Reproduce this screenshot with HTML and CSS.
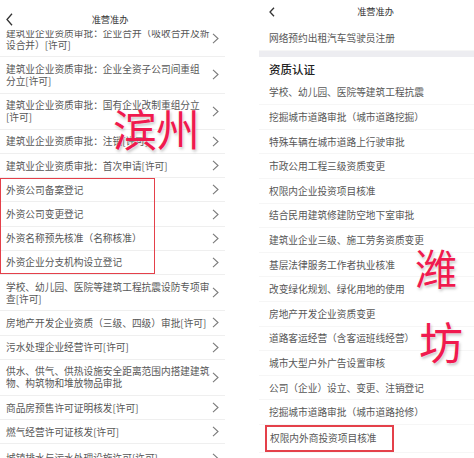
FILE: index.html
```html
<!DOCTYPE html>
<html lang="zh-CN">
<head>
  <meta charset="UTF-8">
  <meta name="viewport" content="width=device-width, initial-scale=1.0">
  <title>准营准办</title>
  <link rel="stylesheet" href="styles.css">
</head>
<body>
  <div class="screens">
    <!-- 滨州 -->
    <section class="phone phone-left">
      <header class="topbar">
        <span class="back">
          <svg width="7" height="13" viewBox="0 0 7 13"><path d="M6 0.8L1 6.5L6 12.2"/></svg>
        </span>
        <h1 class="title">准营准办</h1>
      </header>

      <div class="list">
        <div class="rows">
          <div class="row row-tall row-cut">
            <span class="label">建筑业企业资质审批：企业合并（吸收合并及新<br>设合并）[许可]</span>
            <svg class="chev" width="7" height="11" viewBox="0 0 7 11"><path d="M1 0.8L6 5.5L1 10.2"/></svg>
          </div>
          <div class="row row-tall">
            <span class="label">建筑业企业资质审批：企业全资子公司间重组<br>分立[许可]</span>
            <svg class="chev" width="7" height="11" viewBox="0 0 7 11"><path d="M1 0.8L6 5.5L1 10.2"/></svg>
          </div>
          <div class="row row-tall">
            <span class="label">建筑业企业资质审批：国有企业改制重组分立<br>[许可]</span>
            <svg class="chev" width="7" height="11" viewBox="0 0 7 11"><path d="M1 0.8L6 5.5L1 10.2"/></svg>
          </div>
          <div class="row">
            <span class="label">建筑业企业资质审批：注销[许可]</span>
            <svg class="chev" width="7" height="11" viewBox="0 0 7 11"><path d="M1 0.8L6 5.5L1 10.2"/></svg>
          </div>
          <div class="row">
            <span class="label">建筑业企业资质审批：首次申请[许可]</span>
            <svg class="chev" width="7" height="11" viewBox="0 0 7 11"><path d="M1 0.8L6 5.5L1 10.2"/></svg>
          </div>

          <div class="picked">
            <div class="row">
              <span class="label">外资公司备案登记</span>
              <svg class="chev" width="7" height="11" viewBox="0 0 7 11"><path d="M1 0.8L6 5.5L1 10.2"/></svg>
            </div>
            <div class="row">
              <span class="label">外资公司变更登记</span>
              <svg class="chev" width="7" height="11" viewBox="0 0 7 11"><path d="M1 0.8L6 5.5L1 10.2"/></svg>
            </div>
            <div class="row">
              <span class="label">外资名称预先核准（名称核准）</span>
              <svg class="chev" width="7" height="11" viewBox="0 0 7 11"><path d="M1 0.8L6 5.5L1 10.2"/></svg>
            </div>
            <div class="row">
              <span class="label">外资企业分支机构设立登记</span>
              <svg class="chev" width="7" height="11" viewBox="0 0 7 11"><path d="M1 0.8L6 5.5L1 10.2"/></svg>
            </div>
          </div>

          <div class="row row-tall">
            <span class="label">学校、幼儿园、医院等建筑工程抗震设防专项审<br>查[许可]</span>
            <svg class="chev" width="7" height="11" viewBox="0 0 7 11"><path d="M1 0.8L6 5.5L1 10.2"/></svg>
          </div>
          <div class="row">
            <span class="label">房地产开发企业资质（三级、四级）审批[许可]</span>
            <svg class="chev" width="7" height="11" viewBox="0 0 7 11"><path d="M1 0.8L6 5.5L1 10.2"/></svg>
          </div>
          <div class="row">
            <span class="label">污水处理企业经营许可[许可]</span>
            <svg class="chev" width="7" height="11" viewBox="0 0 7 11"><path d="M1 0.8L6 5.5L1 10.2"/></svg>
          </div>
          <div class="row row-tall">
            <span class="label">供水、供气、供热设施安全距离范围内搭建建筑<br>物、构筑物和堆放物品审批</span>
            <svg class="chev" width="7" height="11" viewBox="0 0 7 11"><path d="M1 0.8L6 5.5L1 10.2"/></svg>
          </div>
          <div class="row">
            <span class="label">商品房预售许可证明核发[许可]</span>
            <svg class="chev" width="7" height="11" viewBox="0 0 7 11"><path d="M1 0.8L6 5.5L1 10.2"/></svg>
          </div>
          <div class="row">
            <span class="label">燃气经营许可证核发[许可]</span>
            <svg class="chev" width="7" height="11" viewBox="0 0 7 11"><path d="M1 0.8L6 5.5L1 10.2"/></svg>
          </div>
          <div class="row row-peek">
            <span class="label">城镇排水与污水处理设施许可[许可]</span>
            <svg class="chev" width="7" height="11" viewBox="0 0 7 11"><path d="M1 0.8L6 5.5L1 10.2"/></svg>
          </div>
        </div>
      </div>

      <span class="stamp stamp-binzhou">滨州</span>
    </section>

    <!-- 潍坊 -->
    <section class="phone phone-right">
      <header class="topbar topbar-small">
        <span class="back">
          <svg width="6" height="10" viewBox="0 0 6 10"><path d="M5 0.7L1 5L5 9.3"/></svg>
        </span>
        <h1 class="title">准营准办</h1>
      </header>

      <div class="item">网络预约出租汽车驾驶员注册</div>
      <div class="divider"></div>
      <h2 class="section">资质认证</h2>

      <div class="item">学校、幼儿园、医院等建筑工程抗震</div>
      <div class="item">挖掘城市道路审批（城市道路挖掘）</div>
      <div class="item">特殊车辆在城市道路上行驶审批</div>
      <div class="item">市政公用工程三级资质变更</div>
      <div class="item">权限内企业投资项目核准</div>
      <div class="item">结合民用建筑修建防空地下室审批</div>
      <div class="item">建筑业企业三级、施工劳务资质变更</div>
      <div class="item">基层法律服务工作者执业核准</div>
      <div class="item">改变绿化规划、绿化用地的使用</div>
      <div class="item">房地产开发企业资质变更</div>
      <div class="item">道路客运经营（含客运班线经营）</div>
      <div class="item">城市大型户外广告设置审核</div>
      <div class="item">公司（企业）设立、变更、注销登记</div>
      <div class="item">挖掘城市道路审批（城市道路抢修）</div>
      <div class="item item-last"><span class="marked">权限内外商投资项目核准</span></div>

      <span class="stamp stamp-wei">潍</span>
      <span class="stamp stamp-fang">坊</span>
    </section>
  </div>
</body>
</html>
```

FILE: styles.css
```css
* {
  box-sizing: border-box;
  margin: 0;
  padding: 0;
}

html,
body {
  width: 474px;
  height: 458px;
  overflow: hidden;
  background: #fff;
}

body {
  font-family: "Noto Sans CJK SC", "Noto Sans", sans-serif;
  color: #575757;
}

.screens {
  display: flex;
  justify-content: space-between;
  height: 458px;
}

.phone {
  position: relative;
  height: 458px;
  overflow: hidden;
  display: flex;
  flex-direction: column;
}

.phone-left {
  width: 225px;
}

.phone-right {
  width: 215px;
}

/* top bar */
.topbar {
  height: 30px;
  flex: none;
  display: flex;
  align-items: center;
  padding-top: 8px;
  background: #fff;
  position: relative;
  z-index: 1;
}

.back {
  width: 24px;
  padding-left: 6px;
  display: flex;
}

.back svg path {
  fill: none;
  stroke: #333;
  stroke-width: 1.3;
}

.title {
  flex: 1;
  padding-right: 29px;
  text-align: center;
  font-size: 9.2px;
  line-height: 13px;
  font-weight: 400;
  color: #333;
}

.topbar-small {
  height: 26px;
  align-items: flex-start;
  padding-top: 5px;
}

.topbar-small .back {
  width: 20px;
  padding-left: 10px;
  padding-top: 2px;
}

.topbar-small .title {
  padding-right: 2px;
}

/* left list */
.list {
  flex: 1;
  overflow: hidden;
}

.row {
  height: 24.2px;
  display: flex;
  align-items: center;
  justify-content: space-between;
  padding: 0 6px;
  border-bottom: 1px solid #efefef;
  font-size: 9.7px;
  line-height: 12px;
  white-space: nowrap;
}

.row-tall {
  height: 36.3px;
}

.row-cut {
  margin-top: -9px;
}

.row-peek {
  padding-top: 5px;
}

.chev {
  flex: none;
}

.chev path {
  fill: none;
  stroke: #7a7a7a;
  stroke-width: 1.1;
}

.picked {
  position: relative;
}

.picked::after {
  content: "";
  position: absolute;
  left: 0;
  top: 0;
  bottom: 1px;
  width: 153px;
  border: 1.5px solid #e4404a;
}

/* right list */
.item {
  height: 24.6px;
  display: flex;
  align-items: center;
  padding-left: 10px;
  border-bottom: 1px solid #f6f6f6;
  font-size: 9.7px;
  white-space: nowrap;
}

.divider {
  height: 6px;
  background: #ededf1;
}

.section {
  height: 24px;
  display: flex;
  align-items: center;
  padding-left: 10px;
  font-size: 11.5px;
  font-weight: 500;
  color: #222;
}

.item-last {
  height: 28px;
  padding-left: 6px;
}

.marked {
  display: inline-flex;
  align-items: center;
  height: 27px;
  padding: 0 15px 0 3px;
  border: 2px solid #e4404a;
}

/* red city names written over the shots */
.stamp {
  position: absolute;
  z-index: 2;
  font-size: 44px;
  line-height: 1;
  font-weight: 400;
  color: #f01a4e;
  text-shadow: 0 0 2px #fff, 1px 2px 3px rgba(0, 0, 0, 0.25);
}

.stamp-binzhou {
  left: 113px;
  top: 106px;
  letter-spacing: -1px;
}

.stamp-wei {
  left: 156px;
  top: 246px;
  font-size: 42px;
}

.stamp-fang {
  left: 160px;
  top: 319px;
}
```
